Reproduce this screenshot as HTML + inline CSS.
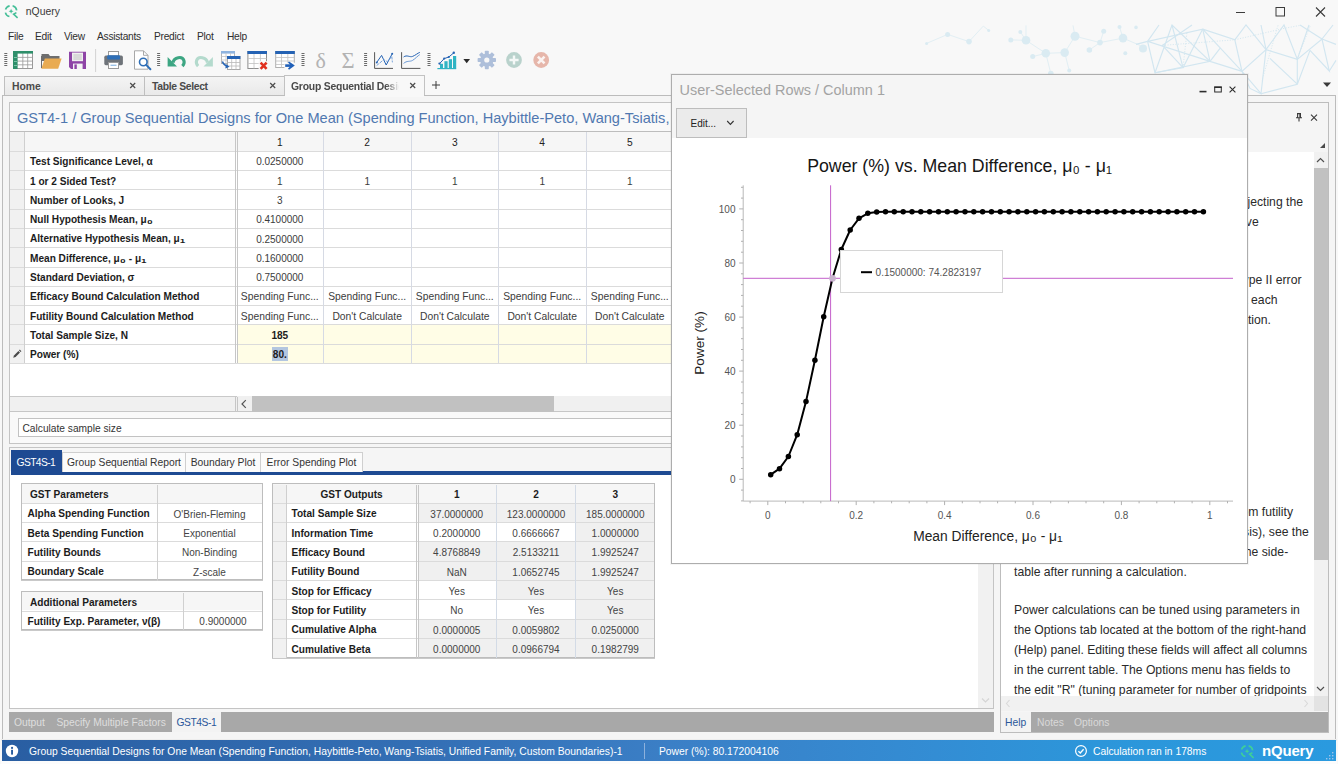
<!DOCTYPE html>
<html lang="en">
<head>
<meta charset="utf-8">
<title>nQuery</title>
<style>
*{box-sizing:border-box;margin:0;padding:0}
html,body{width:1338px;height:764px;overflow:hidden}
body{position:relative;background:#f4f4f4;font-family:"Liberation Sans",sans-serif;font-size:10px;color:#1e1e1e}
.a{position:absolute}
.t{position:absolute;white-space:nowrap;line-height:1}
.b{font-weight:bold}
.sb{font-size:1.35em;line-height:0;vertical-align:-.06em}
.c{text-align:center}
svg{position:absolute;overflow:visible}
/* grid */
.g{position:absolute;border-collapse:collapse}
.cell{position:absolute;height:19.25px;line-height:19px;white-space:nowrap;overflow:hidden}
.hl{position:absolute;height:1px;background:#dbdbdb}
.vl{position:absolute;width:1px;background:#d9d9d9}
</style>
</head>
<body>
<!-- ===== window chrome / title bar ===== -->
<div class="a" style="left:0;top:0;width:1338px;height:764px;background:#f8f8f8"></div>
<!-- decorative network graphic top right -->
<svg style="left:920px;top:24.6px" width="416" height="72" viewBox="920 24.6 416 72" fill="none">
 <g stroke="#e2eff4" stroke-width="1"><path d="M926.6 43 L947.6 34 L969 41.2 L983.3 25.7 L988.7 30"/><path d="M1010.8 39.5 L1026 39.9 L1045.8 52.9 L1064.7 52.2 L1075 35.8 L1100 42.2 L1123 37.7 L1140 45"/><path d="M1026 39.9 V25 M1045.8 52.9 L1050.8 73.1 M1064.7 52.2 L1069.2 70 M1075 35.8 L1073 25 M1100 42.2 L1103.7 30.8 M1100 42.2 L1089.4 49.6 M1032.7 56.2 L1045.8 52.9 M1123 37.7 L1119.5 26.5 M1020.3 31.5 L1026 39.9"/></g>
 <g fill="#daebf2"><circle cx="926.6" cy="43" r="1.5"/><circle cx="947.6" cy="34" r="2.5"/><circle cx="969" cy="41.2" r="2.8"/><circle cx="988.7" cy="30" r="1.5"/><circle cx="1010.8" cy="39.5" r="2.5"/><circle cx="1026" cy="39.9" r="4.3"/><circle cx="1020.3" cy="31.5" r="2"/><circle cx="1045.8" cy="52.9" r="4.3"/><circle cx="1032.7" cy="56.2" r="2.5"/><circle cx="1064.7" cy="52.2" r="4.3"/><circle cx="1075" cy="35.8" r="4.5"/><circle cx="1050.8" cy="73.1" r="2.8"/><circle cx="1069.2" cy="70" r="2"/><circle cx="1089.4" cy="49.6" r="2.8"/><circle cx="1100" cy="42.2" r="2.8"/><circle cx="1103.7" cy="30.8" r="2.5"/><circle cx="1123" cy="37.7" r="4.3"/><circle cx="1119.5" cy="26.5" r="2"/><circle cx="1125.3" cy="52.9" r="2"/><circle cx="1143" cy="48" r="4"/><circle cx="1136" cy="27" r="1.8"/></g>
 <g stroke="#d2e6f0" stroke-width="1.15"><path d="M1147.6 41 L1155 72.3 L1210 61 L1202.7 28.7 L1147.6 41 L1210 61"/><path d="M1147.6 41 L1159 24.6 M1155 72.3 L1172 24.6 L1210 61 M1155 72.3 L1183 67.3 L1162.4 45 L1192 24.6"/><path d="M1202.7 28.7 L1234.8 39.4 L1242 71 L1202.7 28.7 M1210 61 L1242 71 M1210 61 L1220 48 M1202.7 28.7 L1183 67.3"/><path d="M1234.8 39.4 L1246 24.6 L1266 49.2 L1242 71 L1261 93.3 L1266 49.2 L1297.3 59 L1322 38.6 L1329.3 70.6 L1310 50"/><path d="M1266 49.2 L1261 24.6 M1266 49.2 L1284 24.6 L1297.3 59 L1297.3 83.8 L1261 93.3 M1297.3 83.8 L1270 58 M1297.3 59 L1309 24.6 M1322 38.6 L1333 24.6 M1322 38.6 L1300 24.6 M1297.3 83.8 L1310 50 M1329.3 70.6 L1336 60 M1322 38.6 L1336 44"/><path d="M1242 71 L1250 88 L1261 93.3 M1172 24.6 L1183 67.3 M1147.6 41 L1136 44"/></g>
 <g stroke="#d3e7f0" stroke-width="1" stroke-dasharray="1 1.6"><path d="M1162.4 45 L1234.8 39.4 L1284 28 L1300 25"/><path d="M1183 67.3 L1187 31 M1278 25 L1262 80 M1310 26 L1297 59"/></g>
</svg>
<!-- app logo -->
<svg style="left:3px;top:3px" width="17" height="17" viewBox="0 0 17 17">
 <g fill="none" stroke="#45bf98" stroke-width="1.6">
 <path d="M6.6 2.9 A5.7 5.7 0 0 0 2.5 6.6"/>
 <path d="M2.4 9.6 A5.7 5.7 0 0 0 6.4 13.6"/>
 <path d="M9.6 2.8 A5.7 5.7 0 0 1 13.7 7.4"/>
 <path d="M14.6 14.8 L10.6 11.2 L13.4 9.6" stroke-linejoin="miter"/>
 </g>
 <path d="M8.1 5.7 L8.8 7.5 L10.6 8.2 L8.8 8.9 L8.1 10.7 L7.4 8.9 L5.6 8.2 L7.4 7.5z" fill="#45bf98"/>
</svg>
<div class="t" style="left:25.8px;top:7.2px;font-size:10.4px;color:#3a3a3a">nQuery</div>
<!-- window buttons -->
<svg style="left:1230px;top:4px" width="100" height="16" viewBox="0 0 100 16" fill="none" stroke="#3c3c3c" stroke-width="1">
 <path d="M6 8.5 H15"/>
 <rect x="46" y="3.5" width="8.5" height="8.5"/>
 <path d="M86 3.5 L95 12.5 M95 3.5 L86 12.5" stroke-width="1.1"/>
</svg>
<!-- menu bar -->
<div class="t" style="left:8px;top:32px;font-size:10.2px;color:#2e2e2e;letter-spacing:-.25px">
 <span class="a" style="left:0">File</span><span class="a" style="left:27px">Edit</span><span class="a" style="left:56px">View</span><span class="a" style="left:89px">Assistants</span><span class="a" style="left:146px">Predict</span><span class="a" style="left:189px">Plot</span><span class="a" style="left:219px">Help</span>
</div>
<!-- ===== toolbar ===== -->
<svg style="left:0;top:46px" width="560" height="28" viewBox="0 46 560 28" fill="none">
 <!-- grips -->
 <g stroke="#6a6a6a" stroke-width="3" stroke-dasharray="1 1">
  <path d="M5.8 53 V67"/><path d="M158.6 53 V67"/><path d="M303 53 V67"/><path d="M365.6 53 V67"/><path d="M429 53 V67"/>
 </g>
 <!-- new table (green) -->
 <g>
  <rect x="13.5" y="51.5" width="19" height="17" fill="#fff" stroke="#8f8f8f" stroke-width=".9"/>
  <path d="M13.5 57.4 H32.5 M13.5 61.1 H32.5 M13.5 64.8 H32.5 M22.8 51.5 V68.5 M27.7 51.5 V68.5" stroke="#9a9a9a" stroke-width=".8"/>
  <rect x="13" y="51" width="20" height="2.6" fill="#2f8f6b"/>
  <rect x="13" y="51" width="4.6" height="18" fill="#2f8f6b"/>
  <path d="M14 57.5 h3 M14 61.5 h3 M14 65.5 h3" stroke="#7cc3a8" stroke-width="1"/>
 </g>
 <!-- open folder -->
 <g>
  <path d="M41.5 54 h7 l1.5 2 h9.5 v5 h-18z" fill="#6e6e6e"/>
  <path d="M41.3 68.8 L44.8 58.5 H61.6 L58.2 68.8z" fill="#e9ab52"/>
  <path d="M41.5 56 V68" stroke="#6e6e6e" stroke-width="1"/>
 </g>
 <!-- save (purple) -->
 <g>
  <path d="M69 51.8 H86 V69 H71 L69 67z" fill="#8e44a6"/>
  <rect x="72" y="52.6" width="11" height="8.6" fill="#efefef"/>
  <path d="M73.4 55 h8.4 M73.4 57 h8.4 M73.4 59 h8.4" stroke="#bdbdbd" stroke-width=".9"/>
  <rect x="73" y="63.6" width="9.6" height="5.4" fill="#f4f4f4"/>
  <rect x="74.4" y="64.4" width="2.4" height="4.6" fill="#8e44a6"/>
 </g>
 <path d="M95.6 49 V72" stroke="#d2d2d2" stroke-width="1"/>
 <!-- print -->
 <g>
  <rect x="108.5" y="51.5" width="10" height="5" fill="#fff" stroke="#9a9a9a"/>
  <rect x="104.3" y="55.6" width="18.6" height="9.6" rx="1.6" fill="#6f747a"/>
  <rect x="107.2" y="55.2" width="12.8" height="4.2" rx="1" fill="#2f6fb7"/>
  <rect x="108.5" y="62.5" width="10" height="6" fill="#fff" stroke="#9a9a9a"/>
  <path d="M110.5 65.3 h6" stroke="#9cc3e8" stroke-width="1.4"/>
 </g>
 <!-- print preview -->
 <g>
  <path d="M134.5 50.8 H143.5 L148 55.3 V69.2 H134.5z" fill="#fff" stroke="#a8a8a8"/>
  <path d="M143.5 50.8 V55.3 H148" stroke="#a8a8a8"/>
  <circle cx="143.3" cy="62" r="3.8" fill="#fff" stroke="#2f6fb7" stroke-width="1.6"/>
  <path d="M146.2 64.9 L150.4 69.2" stroke="#2f6fb7" stroke-width="2" stroke-linecap="round"/>
 </g>
 <!-- undo -->
 <g>
  <path d="M173 62.6 C174 57.4 182.2 55.4 183.9 60.6 C184.6 62.8 183.8 64.8 182.4 66.2" fill="none" stroke="#3da683" stroke-width="3.1"/>
  <path d="M167.6 57 V66.4 H177z" fill="#3da683"/>
 </g>
 <!-- redo -->
 <g opacity=".36">
  <path d="M207.5 62.6 C206.5 57.4 198.3 55.4 196.6 60.6 C195.9 62.8 196.7 64.8 198.1 66.2" fill="none" stroke="#3da683" stroke-width="3.1"/>
  <path d="M212.9 57 V66.4 H203.5z" fill="#3da683"/>
 </g>
 <!-- copy table -->
 <g>
  <rect x="221.5" y="51.5" width="13" height="12" fill="#fff" stroke="#b5b5b5"/>
  <rect x="221" y="51" width="14" height="2.6" fill="#8fb4df"/>
  <path d="M221.5 56.5 h13 M221.5 60 h13 M226 53 v10 M230.5 53 v10" stroke="#c4c4c4" stroke-width=".8"/>
  <rect x="227.5" y="56.5" width="12.5" height="13" fill="#fff" stroke="#a8a8a8"/>
  <rect x="227" y="56" width="13.4" height="3" fill="#2563b4"/>
  <path d="M227.5 62.5 h12.5 M227.5 66 h12.5 M231.7 59 v10.5 M236 59 v10.5" stroke="#b9b9b9" stroke-width=".8"/>
  <path d="M222.4 61.6 C223.4 64.4 225 65.8 227.8 66.4" stroke="#2563b4" stroke-width="1.5"/>
  <path d="M229.6 66.8 L225.8 63.9 L225.4 68.4z" fill="#2563b4"/>
 </g>
 <!-- delete table -->
 <g>
  <rect x="247.9" y="51.5" width="18.6" height="17" fill="#fff" stroke="#8d8d8d"/>
  <rect x="247.4" y="51" width="19.6" height="3" fill="#2563b4"/>
  <path d="M247.9 58.5 h18.6 M247.9 63.5 h18.6 M254 54 v14.5 M260.4 54 v14.5" stroke="#c2c2c2" stroke-width=".8"/>
  <rect x="258.6" y="61.2" width="9.6" height="8.6" fill="#f8f8f8"/>
  <path d="M260.6 62.6 L266.6 68.8 M266.6 62.6 L260.6 68.8" stroke="#e0301e" stroke-width="2.6"/>
 </g>
 <!-- export table -->
 <g>
  <rect x="275.7" y="51.5" width="18.6" height="16" fill="#fff" stroke="#b0b0b0"/>
  <rect x="275.2" y="51" width="19.6" height="3" fill="#2563b4"/>
  <path d="M275.7 57.5 h18.6 M275.7 61 h18.6 M275.7 64.5 h18.6 M281.5 54 v13.5 M287.8 54 v13.5" stroke="#c2c2c2" stroke-width=".8"/>
  <rect x="284.4" y="62.8" width="11.4" height="7" fill="#f8f8f8"/>
  <path d="M285.2 65.6 H291" stroke="#1f5fb8" stroke-width="2.6"/>
  <path d="M289 61.4 L294.8 65.6 L289 69.8 L288 68.6 L291 65.6 L288 62.6z" fill="#1f5fb8"/>
 </g>
 <!-- delta, sigma -->
 <text x="320.8" y="67.6" font-family="'Liberation Serif',serif" font-size="22" fill="#b3b3b3" text-anchor="middle">δ</text>
 <text x="348" y="67.8" font-family="'Liberation Serif',serif" font-size="22.5" fill="#b3b3b3" text-anchor="middle">Σ</text>
 <!-- line chart 1 -->
 <g>
  <path d="M374.6 52.2 V68.4 H393" stroke="#555" stroke-width="1"/>
  <path d="M376.6 62.6 L381.6 55.4 L386.2 65 L392.2 53.8" stroke="#2563b4" stroke-width="1"/>
  <path d="M376.6 65.6 L383.8 59.6 L387.2 61.6 L391.8 56.6 L392.4 62.4" stroke="#6b9ad6" stroke-width=".9" stroke-dasharray="3 1"/>
  <circle cx="376.8" cy="62.6" r="1" fill="#2563b4"/><circle cx="392.2" cy="53.8" r="1" fill="#2563b4"/>
 </g>
 <!-- line chart 2 -->
 <g>
  <path d="M401.6 52.2 V68.4 H420.4" stroke="#555" stroke-width="1"/>
  <path d="M403.6 57 C407 54.4 409.6 57.6 412.6 56.4 C415.6 55.2 417.6 53.2 419.8 52.4" stroke="#2563b4" stroke-width="1"/>
  <path d="M403.6 63.4 C407 60.4 409.6 62 412.6 60.4 C415.6 58.4 417.6 56 419.8 54.6" stroke="#6b9ad6" stroke-width="1"/>
 </g>
 <!-- bar chart -->
 <g>
  <path d="M437.4 68.6 H456.2" stroke="#2fb4c4" stroke-width="1.2"/>
  <rect x="440" y="63.8" width="3" height="4.4" fill="#2fb4c4"/>
  <rect x="444.4" y="61.2" width="3.2" height="7" fill="#2fb4c4"/>
  <rect x="448.8" y="59.2" width="3.2" height="9" fill="#2fb4c4"/>
  <rect x="453" y="56" width="3.2" height="12.2" fill="#2fb4c4"/>
  <path d="M439.4 63.8 L444.2 58.6 L448.8 57 L453.8 52.8" stroke="#2563b4" stroke-width="1"/>
  <circle cx="439.4" cy="63.6" r="1.1" fill="#2563b4"/><circle cx="444.2" cy="58.6" r="1.1" fill="#2563b4"/><circle cx="448.8" cy="57" r="1.1" fill="#2563b4"/><circle cx="453.8" cy="52.8" r="1.2" fill="#2563b4"/>
 </g>
 <path d="M463.4 59 H470 L466.7 63.2z" fill="#2a2a2a"/>
 <!-- gear -->
 <g transform="translate(486.8 60)" fill="#aebfda">
  <g>
   <rect x="-2" y="-9.2" width="4" height="18.4" rx=".8"/>
   <rect x="-2" y="-9.2" width="4" height="18.4" rx=".8" transform="rotate(45)"/>
   <rect x="-2" y="-9.2" width="4" height="18.4" rx=".8" transform="rotate(90)"/>
   <rect x="-2" y="-9.2" width="4" height="18.4" rx=".8" transform="rotate(135)"/>
  </g>
  <circle r="6.6"/>
  <circle r="2.6" fill="#f8f8f8"/>
 </g>
 <!-- plus circle -->
 <g>
  <circle cx="514" cy="60" r="7.9" fill="#b9d2cc"/>
  <path d="M514 55.4 V64.6 M509.4 60 H518.6" stroke="#f4f8f7" stroke-width="2.4"/>
 </g>
 <!-- x circle -->
 <g>
  <circle cx="541.2" cy="60" r="7.9" fill="#e6b6aa"/>
  <path d="M537.9 56.7 L544.5 63.3 M544.5 56.7 L537.9 63.3" stroke="#fbf3f1" stroke-width="2.6"/>
 </g>
</svg>
<!-- ===== document tabs ===== -->
<div class="a" style="left:3px;top:95px;width:1332px;height:1px;background:#bdbdbd"></div>
<div class="a" style="left:4px;top:76.2px;width:141px;height:19.8px;border:1px solid #bfbfbf;border-bottom:1px solid #bdbdbd;background:linear-gradient(#f4f4f4,#e9e9e9)"></div>
<div class="a" style="left:144px;top:76.2px;width:141px;height:19.8px;border:1px solid #bfbfbf;border-bottom:1px solid #bdbdbd;background:linear-gradient(#f4f4f4,#e9e9e9)"></div>
<div class="a" style="left:284px;top:74.6px;width:141px;height:22.4px;border:1px solid #c2c2c2;border-bottom:none;background:#f8f8f8"></div>
<div class="t b" style="left:12px;top:82px;font-size:10.4px;color:#4a4a4a">Home</div>
<div class="t b" style="left:152px;top:82px;font-size:10.4px;color:#4a4a4a;letter-spacing:-.35px">Table Select</div>
<div class="t b" style="left:291px;top:82px;font-size:10.4px;color:#4a4a4a;letter-spacing:-.22px;width:108px;overflow:hidden;-webkit-mask-image:linear-gradient(90deg,#000 88%,transparent)">Group Sequential Design</div>
<svg style="left:128px;top:81px" width="300" height="10" viewBox="128 81 300 10" stroke="#4c4c4c" stroke-width="1.2" fill="none">
 <path d="M130.2 83 L135.2 88 M135.2 83 L130.2 88"/>
 <path d="M270.2 83 L275.2 88 M275.2 83 L270.2 88"/>
 <path d="M410.2 83 L415.2 88 M415.2 83 L410.2 88"/>
</svg>
<svg style="left:431px;top:80px" width="10" height="10" viewBox="0 0 10 10" stroke="#3a3a3a" stroke-width="1" fill="none"><path d="M5 1 V9 M1 5 H9"/></svg>
<svg style="left:1322px;top:82px" width="10" height="6" viewBox="0 0 10 6"><path d="M1 0.5 H9 L5 5z" fill="#3a3a3a"/></svg>
<!-- ===== document panel ===== -->
<div class="a" style="left:2px;top:95px;width:993px;height:644px;border:1px solid #bcbcbc;border-bottom:none;background:#f5f5f5"></div>
<div class="a" style="left:285px;top:94px;width:139px;height:3px;background:#f8f8f8"></div>
<div class="a" style="left:9px;top:102px;width:985px;height:342px;border:1px solid #c4c4c4;background:#f9f9f9"></div>
<div class="t" style="left:17px;top:110.7px;font-size:14.6px;color:#5078b0;letter-spacing:0">GST4-1 / Group Sequential Designs for One Mean (Spending Function, Haybittle-Peto, Wang-Tsiatis, Unified Family, Custom Boundaries)</div>
<div class="a" style="left:10px;top:131px;width:983px;height:280px;background:#fff;border-top:1px solid #bdbdbd"></div>
<div class="a" style="left:10px;top:132px;width:983px;height:19.3px;background:#f6f6f6"></div>
<div class="a" style="left:10px;top:132px;width:14px;height:231.4px;background:#f1f1f1"></div>
<div class="a" style="left:237px;top:324.8px;width:756px;height:38.6px;background:#fffde6"></div>
<div class="hl" style="left:10px;top:150.8px;width:983px"></div>
<div class="hl" style="left:10px;top:170.1px;width:983px"></div>
<div class="hl" style="left:10px;top:189.4px;width:983px"></div>
<div class="hl" style="left:10px;top:208.6px;width:983px"></div>
<div class="hl" style="left:10px;top:227.9px;width:983px"></div>
<div class="hl" style="left:10px;top:247.2px;width:983px"></div>
<div class="hl" style="left:10px;top:266.5px;width:983px"></div>
<div class="hl" style="left:10px;top:285.8px;width:983px"></div>
<div class="hl" style="left:10px;top:305.0px;width:983px"></div>
<div class="hl" style="left:10px;top:324.3px;width:983px"></div>
<div class="hl" style="left:10px;top:343.6px;width:983px"></div>
<div class="hl" style="left:10px;top:362.9px;width:983px"></div>
<div class="vl" style="left:24px;top:132px;height:231.4px;background:#cfcfcf"></div>
<div class="vl" style="left:234.5px;top:132px;height:231.4px;background:#c6c6c6"></div>
<div class="vl" style="left:236.5px;top:132px;height:231.4px;background:#c6c6c6"></div>
<div class="vl" style="left:323.0px;top:132px;height:231.4px;background:#d6dae4"></div>
<div class="vl" style="left:410.5px;top:132px;height:231.4px;background:#d6dae4"></div>
<div class="vl" style="left:498.0px;top:132px;height:231.4px;background:#d6dae4"></div>
<div class="vl" style="left:585.5px;top:132px;height:231.4px;background:#d6dae4"></div>
<div class="vl" style="left:673.0px;top:132px;height:231.4px;background:#d6dae4"></div>
<div class="vl" style="left:760.5px;top:132px;height:231.4px;background:#d6dae4"></div>
<div class="vl" style="left:848.0px;top:132px;height:231.4px;background:#d6dae4"></div>
<div class="vl" style="left:935.5px;top:132px;height:231.4px;background:#d6dae4"></div>
<div class="t c" style="left:259.8px;width:40px;top:137.6px;font-size:10.2px;color:#222">1</div>
<div class="t c" style="left:347.2px;width:40px;top:137.6px;font-size:10.2px;color:#222">2</div>
<div class="t c" style="left:434.8px;width:40px;top:137.6px;font-size:10.2px;color:#222">3</div>
<div class="t c" style="left:522.2px;width:40px;top:137.6px;font-size:10.2px;color:#222">4</div>
<div class="t c" style="left:609.8px;width:40px;top:137.6px;font-size:10.2px;color:#222">5</div>
<div class="t b" style="left:30px;top:157.3px;font-size:10.1px;color:#1c1c1c">Test Significance Level, α</div>
<div class="t c" style="left:236.8px;width:86px;top:157.4px;font-size:10px;color:#3c3c3c">0.0250000</div>
<div class="t b" style="left:30px;top:176.6px;font-size:10.1px;color:#1c1c1c">1 or 2 Sided Test?</div>
<div class="t c" style="left:236.8px;width:86px;top:176.7px;font-size:10px;color:#3c3c3c">1</div>
<div class="t c" style="left:324.2px;width:86px;top:176.7px;font-size:10px;color:#3c3c3c">1</div>
<div class="t c" style="left:411.8px;width:86px;top:176.7px;font-size:10px;color:#3c3c3c">1</div>
<div class="t c" style="left:499.2px;width:86px;top:176.7px;font-size:10px;color:#3c3c3c">1</div>
<div class="t c" style="left:586.8px;width:86px;top:176.7px;font-size:10px;color:#3c3c3c">1</div>
<div class="t b" style="left:30px;top:195.9px;font-size:10.1px;color:#1c1c1c">Number of Looks, J</div>
<div class="t c" style="left:236.8px;width:86px;top:196.0px;font-size:10px;color:#3c3c3c">3</div>
<div class="t b" style="left:30px;top:215.1px;font-size:10.1px;color:#1c1c1c">Null Hypothesis Mean, μ<span class="sb">₀</span></div>
<div class="t c" style="left:236.8px;width:86px;top:215.2px;font-size:10px;color:#3c3c3c">0.4100000</div>
<div class="t b" style="left:30px;top:234.4px;font-size:10.1px;color:#1c1c1c">Alternative Hypothesis Mean, μ<span class="sb">₁</span></div>
<div class="t c" style="left:236.8px;width:86px;top:234.5px;font-size:10px;color:#3c3c3c">0.2500000</div>
<div class="t b" style="left:30px;top:253.7px;font-size:10.1px;color:#1c1c1c">Mean Difference, μ<span class="sb">₀</span> - μ<span class="sb">₁</span></div>
<div class="t c" style="left:236.8px;width:86px;top:253.8px;font-size:10px;color:#3c3c3c">0.1600000</div>
<div class="t b" style="left:30px;top:273.0px;font-size:10.1px;color:#1c1c1c">Standard Deviation, σ</div>
<div class="t c" style="left:236.8px;width:86px;top:273.1px;font-size:10px;color:#3c3c3c">0.7500000</div>
<div class="t b" style="left:30px;top:292.3px;font-size:10.1px;color:#1c1c1c">Efficacy Bound Calculation Method</div>
<div class="t c" style="left:236.8px;width:86px;top:292.4px;font-size:10.3px;color:#3c3c3c">Spending Func...</div>
<div class="t c" style="left:324.2px;width:86px;top:292.4px;font-size:10.3px;color:#3c3c3c">Spending Func...</div>
<div class="t c" style="left:411.8px;width:86px;top:292.4px;font-size:10.3px;color:#3c3c3c">Spending Func...</div>
<div class="t c" style="left:499.2px;width:86px;top:292.4px;font-size:10.3px;color:#3c3c3c">Spending Func...</div>
<div class="t c" style="left:586.8px;width:86px;top:292.4px;font-size:10.3px;color:#3c3c3c">Spending Func...</div>
<div class="t b" style="left:30px;top:311.5px;font-size:10.1px;color:#1c1c1c">Futility Bound Calculation Method</div>
<div class="t c" style="left:236.8px;width:86px;top:311.6px;font-size:10.3px;color:#3c3c3c">Spending Func...</div>
<div class="t c" style="left:324.2px;width:86px;top:311.6px;font-size:10.3px;color:#3c3c3c">Don't Calculate</div>
<div class="t c" style="left:411.8px;width:86px;top:311.6px;font-size:10.3px;color:#3c3c3c">Don't Calculate</div>
<div class="t c" style="left:499.2px;width:86px;top:311.6px;font-size:10.3px;color:#3c3c3c">Don't Calculate</div>
<div class="t c" style="left:586.8px;width:86px;top:311.6px;font-size:10.3px;color:#3c3c3c">Don't Calculate</div>
<div class="t b" style="left:30px;top:330.8px;font-size:10.1px;color:#1c1c1c">Total Sample Size, N</div>
<div class="t c b" style="left:236.8px;width:86px;top:330.8px;font-size:10.1px;color:#1c1c1c">185</div>
<div class="t b" style="left:30px;top:350.1px;font-size:10.1px;color:#1c1c1c">Power (%)</div>
<div class="a" style="left:272px;top:346.6px;width:16px;height:14px;background:#b3c6e0"></div>
<div class="t c b" style="left:236.8px;width:86px;top:350.1px;font-size:10.1px;color:#1c1c1c">80.</div>
<svg style="left:12px;top:349.1px" width="10" height="10" viewBox="0 0 10 10"><path d="M1.2 8.8 L2 6.4 L6.4 2 L8 3.6 L3.6 8z" fill="#4a4a4a"/><path d="M7 1.4 L7.8 .6 L9.4 2.2 L8.6 3z" fill="#4a4a4a"/></svg>
<div class="a" style="left:10px;top:396px;width:983px;height:15.4px;background:#f0f0f0"></div>
<div class="a" style="left:10px;top:396px;width:227px;height:1px;background:#c9c9c9"></div>
<div class="a" style="left:10px;top:411px;width:983px;height:1px;background:#c6c6c6"></div>
<div class="vl" style="left:234.5px;top:397px;height:14px;background:#c6c6c6"></div><div class="vl" style="left:236.5px;top:397px;height:14px;background:#c6c6c6"></div>
<div class="a" style="left:252px;top:396px;width:302px;height:15.5px;background:#c1c1c1"></div>
<svg style="left:240px;top:399px" width="8" height="10" viewBox="0 0 8 10" fill="none" stroke="#555" stroke-width="1.2"><path d="M5.8 1.2 L2 5 L5.8 8.8"/></svg>
<div class="a" style="left:18px;top:418px;width:970px;height:19px;border:1px solid #c2c2c2;background:#fff"></div>
<div class="t" style="left:22.5px;top:423.8px;font-size:10.2px;color:#333">Calculate sample size</div>
<!-- ===== lower results panel ===== -->
<div class="a" style="left:9px;top:447px;width:985px;height:262px;border:1px solid #c4c4c4;background:#fff"></div>
<div class="a" style="left:10px;top:448px;width:983px;height:23px;background:#f5f5f5"></div>
<div class="a" style="left:11px;top:471px;width:982px;height:3.5px;background:#1e4a92"></div>
<div class="a" style="left:11px;top:450px;width:51px;height:22px;background:#1e4a92"></div>
<div class="t" style="left:16.5px;top:457.6px;font-size:10.3px;color:#fff;letter-spacing:-.6px">GST4S-1</div>
<div class="a" style="left:62px;top:452px;width:124px;height:20px;border:1px solid #cfcfcf;border-bottom:none;background:#fbfbfb"></div>
<div class="t c" style="left:62px;width:124px;top:457.8px;font-size:10.3px;color:#333">Group Sequential Report</div>
<div class="a" style="left:185px;top:452px;width:76px;height:20px;border:1px solid #cfcfcf;border-bottom:none;background:#fbfbfb"></div>
<div class="t c" style="left:185px;width:76px;top:457.8px;font-size:10.3px;color:#333">Boundary Plot</div>
<div class="a" style="left:260px;top:452px;width:103px;height:20px;border:1px solid #cfcfcf;border-bottom:none;background:#fbfbfb"></div>
<div class="t c" style="left:260px;width:103px;top:457.8px;font-size:10.3px;color:#333">Error Spending Plot</div>
<div class="a" style="left:21px;top:483.4px;width:241.5px;height:97.1px;background:#fff;border:1px solid #bdbdbd;box-shadow:0 1px 0 #c9c9c9"></div>
<div class="a" style="left:22px;top:484.4px;width:239.5px;height:18.3px;background:#f6f6f6"></div>
<div class="t b" style="left:30px;top:490.0px;font-size:10.1px;color:#1c1c1c">GST Parameters</div>
<div class="hl" style="left:22px;top:502.8px;width:240px"></div>
<div class="t b" style="left:27.5px;top:509.4px;font-size:10.1px;color:#1c1c1c">Alpha Spending Function</div>
<div class="t c" style="left:157px;width:105px;top:509.7px;font-size:10px;color:#444">O'Brien-Fleming</div>
<div class="hl" style="left:22px;top:522.1px;width:240px"></div>
<div class="t b" style="left:27.5px;top:528.7px;font-size:10.1px;color:#1c1c1c">Beta Spending Function</div>
<div class="t c" style="left:157px;width:105px;top:529.0px;font-size:10px;color:#444">Exponential</div>
<div class="hl" style="left:22px;top:541.4px;width:240px"></div>
<div class="t b" style="left:27.5px;top:548.0px;font-size:10.1px;color:#1c1c1c">Futility Bounds</div>
<div class="t c" style="left:157px;width:105px;top:548.3px;font-size:10px;color:#444">Non-Binding</div>
<div class="hl" style="left:22px;top:560.7px;width:240px"></div>
<div class="t b" style="left:27.5px;top:567.3px;font-size:10.1px;color:#1c1c1c">Boundary Scale</div>
<div class="t c" style="left:157px;width:105px;top:567.6px;font-size:10px;color:#444">Z-scale</div>
<div class="vl" style="left:156.5px;top:485.0px;height:95.5px;background:#d0d0d0"></div>
<div class="a" style="left:21px;top:591.1px;width:241.5px;height:39.2px;background:#fff;border:1px solid #bdbdbd;box-shadow:0 1px 0 #c9c9c9"></div>
<div class="a" style="left:22px;top:592.1px;width:239.5px;height:18.3px;background:#f6f6f6"></div>
<div class="t b" style="left:30px;top:597.7px;font-size:10.1px;color:#1c1c1c">Additional Parameters</div>
<div class="hl" style="left:22px;top:610.5px;width:240px"></div>
<div class="t b" style="left:27.5px;top:617.1px;font-size:10.1px;color:#1c1c1c">Futility Exp. Parameter, ν(β)</div>
<div class="t c" style="left:184px;width:78px;top:617.4px;font-size:10px;color:#444">0.9000000</div>
<div class="vl" style="left:183px;top:592.7px;height:37.6px;background:#d0d0d0"></div>
<div class="a" style="left:272px;top:483.4px;width:383px;height:174.3px;background:#fff;border:1px solid #bdbdbd;box-shadow:0 1px 0 #c9c9c9"></div>
<div class="a" style="left:273px;top:484.4px;width:381px;height:18.3px;background:#f6f6f6"></div>
<div class="a" style="left:273px;top:485.0px;width:13px;height:172.7px;background:#f1f1f1"></div>
<div class="a" style="left:418px;top:503.3px;width:236px;height:153.8px;background:#f0f0f0"></div>
<div class="a" style="left:417px;top:580.5px;width:79.5px;height:19.3px;background:#fff"></div>
<div class="a" style="left:417px;top:599.8px;width:79.5px;height:19.3px;background:#fff"></div>
<div class="a" style="left:417px;top:522.6px;width:79.5px;height:19.3px;background:#fff"></div>
<div class="a" style="left:496.5px;top:522.6px;width:79.0px;height:19.3px;background:#fff"></div>
<div class="a" style="left:496.5px;top:599.8px;width:79.0px;height:19.3px;background:#fff"></div>
<div class="t c b" style="left:286px;width:131px;top:490.0px;font-size:10.1px;color:#1c1c1c">GST Outputs</div>
<div class="t c b" style="left:417px;width:79.5px;top:490.0px;font-size:10.1px;color:#1c1c1c">1</div>
<div class="t c b" style="left:496.5px;width:79.0px;top:490.0px;font-size:10.1px;color:#1c1c1c">2</div>
<div class="t c b" style="left:575.5px;width:79.5px;top:490.0px;font-size:10.1px;color:#1c1c1c">3</div>
<div class="hl" style="left:273px;top:502.8px;width:381px"></div>
<div class="t b" style="left:291.5px;top:509.4px;font-size:10.1px;color:#1c1c1c">Total Sample Size</div>
<div class="t c" style="left:417px;width:79.5px;top:509.7px;font-size:10px;color:#444">37.0000000</div>
<div class="t c" style="left:496.5px;width:79.0px;top:509.7px;font-size:10px;color:#444">123.0000000</div>
<div class="t c" style="left:575.5px;width:79.5px;top:509.7px;font-size:10px;color:#444">185.0000000</div>
<div class="hl" style="left:273px;top:522.1px;width:381px"></div>
<div class="t b" style="left:291.5px;top:528.7px;font-size:10.1px;color:#1c1c1c">Information Time</div>
<div class="t c" style="left:417px;width:79.5px;top:529.0px;font-size:10px;color:#444">0.2000000</div>
<div class="t c" style="left:496.5px;width:79.0px;top:529.0px;font-size:10px;color:#444">0.6666667</div>
<div class="t c" style="left:575.5px;width:79.5px;top:529.0px;font-size:10px;color:#444">1.0000000</div>
<div class="hl" style="left:273px;top:541.4px;width:381px"></div>
<div class="t b" style="left:291.5px;top:548.0px;font-size:10.1px;color:#1c1c1c">Efficacy Bound</div>
<div class="t c" style="left:417px;width:79.5px;top:548.3px;font-size:10px;color:#444">4.8768849</div>
<div class="t c" style="left:496.5px;width:79.0px;top:548.3px;font-size:10px;color:#444">2.5133211</div>
<div class="t c" style="left:575.5px;width:79.5px;top:548.3px;font-size:10px;color:#444">1.9925247</div>
<div class="hl" style="left:273px;top:560.7px;width:381px"></div>
<div class="t b" style="left:291.5px;top:567.3px;font-size:10.1px;color:#1c1c1c">Futility Bound</div>
<div class="t c" style="left:417px;width:79.5px;top:567.6px;font-size:10px;color:#444">NaN</div>
<div class="t c" style="left:496.5px;width:79.0px;top:567.6px;font-size:10px;color:#444">1.0652745</div>
<div class="t c" style="left:575.5px;width:79.5px;top:567.6px;font-size:10px;color:#444">1.9925247</div>
<div class="hl" style="left:273px;top:580.0px;width:381px"></div>
<div class="t b" style="left:291.5px;top:586.6px;font-size:10.1px;color:#1c1c1c">Stop for Efficacy</div>
<div class="t c" style="left:417px;width:79.5px;top:586.9px;font-size:10px;color:#444">Yes</div>
<div class="t c" style="left:496.5px;width:79.0px;top:586.9px;font-size:10px;color:#444">Yes</div>
<div class="t c" style="left:575.5px;width:79.5px;top:586.9px;font-size:10px;color:#444">Yes</div>
<div class="hl" style="left:273px;top:599.3px;width:381px"></div>
<div class="t b" style="left:291.5px;top:605.9px;font-size:10.1px;color:#1c1c1c">Stop for Futility</div>
<div class="t c" style="left:417px;width:79.5px;top:606.2px;font-size:10px;color:#444">No</div>
<div class="t c" style="left:496.5px;width:79.0px;top:606.2px;font-size:10px;color:#444">Yes</div>
<div class="t c" style="left:575.5px;width:79.5px;top:606.2px;font-size:10px;color:#444">Yes</div>
<div class="hl" style="left:273px;top:618.6px;width:381px"></div>
<div class="t b" style="left:291.5px;top:625.2px;font-size:10.1px;color:#1c1c1c">Cumulative Alpha</div>
<div class="t c" style="left:417px;width:79.5px;top:625.5px;font-size:10px;color:#444">0.0000005</div>
<div class="t c" style="left:496.5px;width:79.0px;top:625.5px;font-size:10px;color:#444">0.0059802</div>
<div class="t c" style="left:575.5px;width:79.5px;top:625.5px;font-size:10px;color:#444">0.0250000</div>
<div class="hl" style="left:273px;top:637.9px;width:381px"></div>
<div class="t b" style="left:291.5px;top:644.5px;font-size:10.1px;color:#1c1c1c">Cumulative Beta</div>
<div class="t c" style="left:417px;width:79.5px;top:644.8px;font-size:10px;color:#444">0.0000000</div>
<div class="t c" style="left:496.5px;width:79.0px;top:644.8px;font-size:10px;color:#444">0.0966794</div>
<div class="t c" style="left:575.5px;width:79.5px;top:644.8px;font-size:10px;color:#444">0.1982799</div>
<div class="vl" style="left:285.5px;top:485.0px;height:172.7px;background:#cfcfcf"></div>
<div class="vl" style="left:415.5px;top:485.0px;height:172.7px;background:#c6c6c6"></div>
<div class="vl" style="left:417.5px;top:485.0px;height:172.7px;background:#c6c6c6"></div>
<div class="vl" style="left:496px;top:485.0px;height:172.7px;background:#d3dbe6"></div>
<div class="vl" style="left:575px;top:485.0px;height:172.7px;background:#d3dbe6"></div>
<div class="a" style="left:978px;top:475px;width:15px;height:233px;background:#f1f1f1"></div>
<svg style="left:981px;top:697px" width="9" height="7" viewBox="0 0 9 7" fill="none" stroke="#d4d4d4" stroke-width="1.1"><path d="M1 1.5 L4.5 5 L8 1.5"/></svg>
<div class="a" style="left:9px;top:712px;width:986.5px;height:20px;background:#a8a8a8"></div>
<div class="a" style="left:172px;top:712px;width:49px;height:20px;background:#f3f3f3"></div>
<div class="t" style="left:14px;top:717.8px;font-size:10.3px;color:#dedede">Output</div>
<div class="t" style="left:56.5px;top:717.8px;font-size:10.3px;color:#dedede">Specify Multiple Factors</div>
<div class="t" style="left:176.5px;top:717.8px;font-size:10.3px;color:#2b579a;letter-spacing:-.45px">GST4S-1</div>
<!-- ===== help panel (right) ===== -->
<div class="a" style="left:994px;top:95px;width:341.6px;height:644px;border:1px solid #bcbcbc;border-left:none;border-bottom:none;background:#f5f5f5"></div>
<div class="a" style="left:1000px;top:102px;width:1329px;width:329px;height:631px;border:1px solid #bdbdbd;background:#f5f5f5"></div>
<svg style="left:1294px;top:112px" width="26" height="12" viewBox="1294 112 26 12" fill="none">
 <path d="M1297 113.6 h4 M1297.6 113.6 v4 M1300.4 113.6 v4 M1296 117.8 h6 M1299 118 v3.4" stroke="#3a3a3a" stroke-width="1.1"/>
 <rect x="1299.4" y="113.6" width="1.4" height="4" fill="#3a3a3a"/>
 <path d="M1311 114.6 L1317 120.6 M1317 114.6 L1311 120.6" stroke="#3a3a3a" stroke-width="1.1"/>
</svg>
<svg style="left:1320px;top:143px" width="5" height="5" viewBox="0 0 5 5"><path d="M5 0 V5 H0z" fill="#4a4a4a"/></svg>
<div class="a" style="left:1001px;top:152px;width:327px;height:544px;background:#fff"></div>
<!-- vertical scrollbar -->
<div class="a" style="left:1313.5px;top:152px;width:14.5px;height:544px;background:#f1f1f1"></div>
<div class="a" style="left:1313.5px;top:167.5px;width:14.5px;height:392.5px;background:#c1c1c1"></div>
<svg style="left:1316px;top:157px" width="9" height="6" viewBox="0 0 9 6" fill="none" stroke="#505050" stroke-width="1.2"><path d="M1 5 L4.5 1.5 L8 5"/></svg>
<svg style="left:1316px;top:686px" width="9" height="6" viewBox="0 0 9 6" fill="none" stroke="#505050" stroke-width="1.2"><path d="M1 1 L4.5 4.5 L8 1"/></svg>
<!-- horizontal scrollbar -->
<div class="a" style="left:1001px;top:696px;width:327px;height:15px;background:#f1f1f1"></div>
<svg style="left:1005px;top:699px" width="6" height="9" viewBox="0 0 6 9" fill="none" stroke="#d9d9d9" stroke-width="1.1"><path d="M4.5 1 L1.5 4.5 L4.5 8"/></svg>
<svg style="left:1303px;top:699px" width="6" height="9" viewBox="0 0 6 9" fill="none" stroke="#d9d9d9" stroke-width="1.1"><path d="M1.5 1 L4.5 4.5 L1.5 8"/></svg>
<div class="a" style="left:1313.5px;top:696px;width:14.5px;height:15px;background:#e3e3e3"></div>
<!-- help text -->
<div class="a" style="left:1001px;top:152px;width:312px;height:544px;overflow:hidden;font-size:12.2px;color:#2a2a2a;line-height:20px">
 <div class="t" style="right:10px;top:40px;line-height:20px">Power is the probability of correctly rejecting the</div>
 <div class="t" style="right:54.3px;top:60px;line-height:20px">null hypothesis when the alternative</div>
 <div class="t" style="left:13px;top:80px;line-height:20px">hypothesis is true.</div>
 <div class="t" style="right:11.5px;top:118px;line-height:20px">It is equal to one minus the chance of a Type II error</div>
 <div class="t" style="right:35.5px;top:138px;line-height:20px">and is reported as a cumulative value at each</div>
 <div class="t" style="right:42px;top:158px;line-height:20px">look once you have run the calculation.</div>
 <div class="t" style="left:13px;top:196px;line-height:20px">For further detail on the cumulative</div>
 <div class="t" style="left:13px;top:216px;line-height:20px">exit probabilities at each look</div>
 <div class="t" style="right:20px;top:350px;line-height:20px">(including the chance of stopping from futility</div>
 <div class="t" style="right:4.2px;top:370px;line-height:20px">or efficacy at every interim analysis), see the</div>
 <div class="t" style="right:24.8px;top:390px;line-height:20px">Group Sequential Report or the side-</div>
 <div class="t" style="left:13px;top:410px;line-height:20px">table after running a calculation.</div>
 <div class="t" style="left:13px;top:447.5px;line-height:20px">Power calculations can be tuned using parameters in</div>
 <div class="t" style="left:13px;top:467.5px;line-height:20px">the Options tab located at the bottom of the right-hand</div>
 <div class="t" style="left:13px;top:487.5px;line-height:20px">(Help) panel. Editing these fields will affect all columns</div>
 <div class="t" style="left:13px;top:507.5px;line-height:20px">in the current table. The Options menu has fields to</div>
 <div class="t" style="left:13px;top:527.5px;line-height:20px">the edit "R" (tuning parameter for number of gridpoints</div>
</div>
<!-- help bottom tabs -->
<div class="a" style="left:1001px;top:712px;width:327px;height:20px;background:#a8a8a8"></div>
<div class="a" style="left:1001px;top:712px;width:30px;height:20px;background:#f3f3f3"></div>
<div class="t" style="left:1005px;top:717.6px;font-size:10.3px;color:#2b579a">Help</div>
<div class="t" style="left:1037px;top:717.6px;font-size:10.3px;color:#d8d8d8">Notes</div>
<div class="t" style="left:1074px;top:717.6px;font-size:10.3px;color:#d8d8d8">Options</div>
<!-- ===== status bar ===== -->
<div class="a" style="left:1px;top:739px;width:1336px;height:2px;background:#ededed"></div>
<div class="a" style="left:2px;top:739.7px;width:1334px;height:21.1px;background:linear-gradient(90deg,#295ea2 0%,#3470b6 33%,#3b7fc6 50%,#338dd4 70%,#2c96da 82%,#2a9adf 100%)"></div>
<div class="a" style="left:1px;top:761px;width:1336px;height:3px;background:#fcfcfc"></div>
<svg style="left:5px;top:744.2px" width="14" height="14" viewBox="0 0 14 14"><circle cx="7" cy="7" r="6.2" fill="#fff"/><rect x="6.1" y="5.8" width="1.9" height="4.8" fill="#255a9e"/><circle cx="7.05" cy="3.9" r="1.1" fill="#255a9e"/></svg>
<div class="t" style="left:29px;top:746.8px;font-size:10.33px;color:#fff">Group Sequential Designs for One Mean (Spending Function, Haybittle-Peto, Wang-Tsiatis, Unified Family, Custom Boundaries)-1</div>
<div class="a" style="left:644px;top:743px;width:1px;height:16px;background:#8db1dc"></div>
<div class="t" style="left:659px;top:746.8px;font-size:10.3px;color:#fff">Power (%): 80.172004106</div>
<svg style="left:1074px;top:744px" width="14" height="14" viewBox="0 0 14 14" fill="none" stroke="#fff"><circle cx="7" cy="7" r="5.4" stroke-width="1.2"/><path d="M4.4 7.2 L6.3 9 L9.6 5.2" stroke-width="1.3"/></svg>
<div class="t" style="left:1093px;top:746.8px;font-size:10.3px;color:#fff">Calculation ran in 178ms</div>
<svg style="left:1238.6px;top:742.6px" width="17" height="17" viewBox="0 0 17 17">
 <g fill="none" stroke="#3fd097" stroke-width="1.6">
 <path d="M6.6 2.9 A5.7 5.7 0 0 0 2.5 6.6"/>
 <path d="M2.4 9.6 A5.7 5.7 0 0 0 6.4 13.6"/>
 <path d="M9.6 2.8 A5.7 5.7 0 0 1 13.7 7.4"/>
 <path d="M14.6 14.8 L10.6 11.2 L13.4 9.6" stroke-linejoin="miter"/>
 </g>
 <path d="M8.1 5.7 L8.8 7.5 L10.6 8.2 L8.8 8.9 L8.1 10.7 L7.4 8.9 L5.6 8.2 L7.4 7.5z" fill="#3fd097"/>
</svg>
<div class="t b" style="left:1262px;top:743px;font-size:15px;color:#fff;letter-spacing:-.2px">nQuery</div>
<svg style="left:1326px;top:752px" width="8" height="8" viewBox="0 0 8 8" fill="#9cc4ea"><rect x="6" y="0" width="1.4" height="1.4"/><rect x="6" y="3" width="1.4" height="1.4"/><rect x="3" y="3" width="1.4" height="1.4"/><rect x="6" y="6" width="1.4" height="1.4"/><rect x="3" y="6" width="1.4" height="1.4"/><rect x="0" y="6" width="1.4" height="1.4"/></svg>
<!-- ===== floating plot window ===== -->
<div class="a" style="left:671px;top:74px;width:577px;height:490px;border:1px solid #adadad;background:#f5f5f5;box-shadow:0 0 0 1px rgba(0,0,0,.04)"></div>
<div class="t" style="left:679.5px;top:82.6px;font-size:14.45px;color:#a3a3a3">User-Selected Rows / Column 1</div>
<svg style="left:1198px;top:85px" width="40" height="9" viewBox="1198 85 40 9" fill="none" stroke="#2d2d2d"><path d="M1199.5 91.6 H1206.5" stroke-width="1.6"/><rect x="1214.7" y="87.2" width="6.6" height="4.8" stroke-width="1"/><path d="M1214.2 87.2 H1221.8" stroke-width="1.6"/><path d="M1229.6 86.6 L1235.4 92.4 M1235.4 86.6 L1229.6 92.4" stroke-width="1.1"/></svg>
<div class="a" style="left:676px;top:107.5px;width:70.5px;height:30px;border:1px solid #bdbdbd;background:#ebebeb"></div>
<div class="t" style="left:690.5px;top:118.8px;font-size:10px;color:#222">Edit...</div>
<svg style="left:726px;top:120px" width="9" height="6" viewBox="0 0 9 6" fill="none" stroke="#333" stroke-width="1.1"><path d="M1.2 1 L4.4 4.4 L7.6 1"/></svg>
<div class="a" style="left:672px;top:138px;width:575px;height:425px;background:#fff"></div>
<svg style="left:672px;top:138px" width="575" height="425" viewBox="672 138 575 425" font-family="'Liberation Sans',sans-serif">
<text x="959.5" y="172" font-size="17.75" fill="#161616" text-anchor="middle">Power (%) vs. Mean Difference, μ₀ - μ₁</text>
<path d="M743.2 185.3 V501.1 H1233" fill="none" stroke="#b9b9b9" stroke-width="1"/>
<path d="M741.0 500.9 H743.2 M741.0 490.1 H743.2 M739.2 479.3 H743.2 M741.0 468.5 H743.2 M741.0 457.7 H743.2 M741.0 446.9 H743.2 M741.0 436.0 H743.2 M739.2 425.2 H743.2 M741.0 414.4 H743.2 M741.0 403.6 H743.2 M741.0 392.8 H743.2 M741.0 382.0 H743.2 M739.2 371.1 H743.2 M741.0 360.3 H743.2 M741.0 349.5 H743.2 M741.0 338.7 H743.2 M741.0 327.9 H743.2 M739.2 317.1 H743.2 M741.0 306.2 H743.2 M741.0 295.4 H743.2 M741.0 284.6 H743.2 M741.0 273.8 H743.2 M739.2 263.0 H743.2 M741.0 252.2 H743.2 M741.0 241.3 H743.2 M741.0 230.5 H743.2 M741.0 219.7 H743.2 M739.2 208.9 H743.2 M741.0 198.1 H743.2 M741.0 187.3 H743.2" stroke="#b0b0b0" stroke-width="1" fill="none"/>
<text x="735.5" y="482.9" font-size="10" fill="#555" text-anchor="end">0</text>
<text x="735.5" y="428.8" font-size="10" fill="#555" text-anchor="end">20</text>
<text x="735.5" y="374.7" font-size="10" fill="#555" text-anchor="end">40</text>
<text x="735.5" y="320.7" font-size="10" fill="#555" text-anchor="end">60</text>
<text x="735.5" y="266.6" font-size="10" fill="#555" text-anchor="end">80</text>
<text x="735.5" y="212.5" font-size="10" fill="#555" text-anchor="end">100</text>
<path d="M750.1 501.1 V503.3 M767.8 501.1 V505.1 M785.5 501.1 V503.3 M803.2 501.1 V503.3 M820.8 501.1 V503.3 M838.5 501.1 V503.3 M856.2 501.1 V505.1 M873.9 501.1 V503.3 M891.6 501.1 V503.3 M909.2 501.1 V503.3 M926.9 501.1 V503.3 M944.6 501.1 V505.1 M962.3 501.1 V503.3 M980.0 501.1 V503.3 M997.6 501.1 V503.3 M1015.3 501.1 V503.3 M1033.0 501.1 V505.1 M1050.7 501.1 V503.3 M1068.4 501.1 V503.3 M1086.0 501.1 V503.3 M1103.7 501.1 V503.3 M1121.4 501.1 V505.1 M1139.1 501.1 V503.3 M1156.8 501.1 V503.3 M1174.4 501.1 V503.3 M1192.1 501.1 V503.3 M1209.8 501.1 V505.1 M1227.5 501.1 V503.3" stroke="#b0b0b0" stroke-width="1" fill="none"/>
<text x="767.8" y="518.6" font-size="10" fill="#555" text-anchor="middle">0</text>
<text x="856.2" y="518.6" font-size="10" fill="#555" text-anchor="middle">0.2</text>
<text x="944.6" y="518.6" font-size="10" fill="#555" text-anchor="middle">0.4</text>
<text x="1033.0" y="518.6" font-size="10" fill="#555" text-anchor="middle">0.6</text>
<text x="1121.4" y="518.6" font-size="10" fill="#555" text-anchor="middle">0.8</text>
<text x="1209.8" y="518.6" font-size="10" fill="#555" text-anchor="middle">1</text>
<text x="988" y="540.6" font-size="13.8" fill="#222" text-anchor="middle">Mean Difference, μ<tspan font-size="17" dy="0.6">₀</tspan><tspan dy="-0.6"> - μ</tspan><tspan font-size="17" dy="0.6">₁</tspan></text>
<text transform="translate(703.6 343) rotate(-90)" font-size="13.6" fill="#222" text-anchor="middle">Power (%)</text>
<path d="M830.6 185.3 V501.1 M743.2 278.3 H1233" stroke="#c45fcb" stroke-width="1" fill="none"/>
<polyline fill="none" stroke="#000" stroke-width="2" stroke-linejoin="round" points="770.7,474.7 779.5,468.7 788.4,456.5 797.2,434.7 806.0,401.6 814.9,360.2 823.7,316.8 832.5,278.3 841.3,249.5 850.2,230.0 859.0,218.3 867.8,213.3 876.7,211.9 885.5,211.7 894.3,211.7 903.2,211.7 912.0,211.7 920.8,211.7 929.6,211.7 938.5,211.7 947.3,211.7 956.1,211.7 965.0,211.7 973.8,211.7 982.6,211.7 991.5,211.7 1000.3,211.7 1009.1,211.7 1017.9,211.7 1026.8,211.7 1035.6,211.7 1044.4,211.7 1053.3,211.7 1062.1,211.7 1070.9,211.7 1079.8,211.7 1088.6,211.7 1097.4,211.7 1106.2,211.7 1115.1,211.7 1123.9,211.7 1132.7,211.7 1141.6,211.7 1150.4,211.7 1159.2,211.7 1168.1,211.7 1176.9,211.7 1185.7,211.7 1194.5,211.7 1203.4,211.7"/>
<g fill="#000"><circle cx="770.7" cy="474.7" r="2.75"/><circle cx="779.5" cy="468.7" r="2.75"/><circle cx="788.4" cy="456.5" r="2.75"/><circle cx="797.2" cy="434.7" r="2.75"/><circle cx="806.0" cy="401.6" r="2.75"/><circle cx="814.9" cy="360.2" r="2.75"/><circle cx="823.7" cy="316.8" r="2.75"/><circle cx="841.3" cy="249.5" r="2.75"/><circle cx="850.2" cy="230.0" r="2.75"/><circle cx="859.0" cy="218.3" r="2.75"/><circle cx="867.8" cy="213.3" r="2.75"/><circle cx="876.7" cy="211.9" r="2.75"/><circle cx="885.5" cy="211.7" r="2.75"/><circle cx="894.3" cy="211.7" r="2.75"/><circle cx="903.2" cy="211.7" r="2.75"/><circle cx="912.0" cy="211.7" r="2.75"/><circle cx="920.8" cy="211.7" r="2.75"/><circle cx="929.6" cy="211.7" r="2.75"/><circle cx="938.5" cy="211.7" r="2.75"/><circle cx="947.3" cy="211.7" r="2.75"/><circle cx="956.1" cy="211.7" r="2.75"/><circle cx="965.0" cy="211.7" r="2.75"/><circle cx="973.8" cy="211.7" r="2.75"/><circle cx="982.6" cy="211.7" r="2.75"/><circle cx="991.5" cy="211.7" r="2.75"/><circle cx="1000.3" cy="211.7" r="2.75"/><circle cx="1009.1" cy="211.7" r="2.75"/><circle cx="1017.9" cy="211.7" r="2.75"/><circle cx="1026.8" cy="211.7" r="2.75"/><circle cx="1035.6" cy="211.7" r="2.75"/><circle cx="1044.4" cy="211.7" r="2.75"/><circle cx="1053.3" cy="211.7" r="2.75"/><circle cx="1062.1" cy="211.7" r="2.75"/><circle cx="1070.9" cy="211.7" r="2.75"/><circle cx="1079.8" cy="211.7" r="2.75"/><circle cx="1088.6" cy="211.7" r="2.75"/><circle cx="1097.4" cy="211.7" r="2.75"/><circle cx="1106.2" cy="211.7" r="2.75"/><circle cx="1115.1" cy="211.7" r="2.75"/><circle cx="1123.9" cy="211.7" r="2.75"/><circle cx="1132.7" cy="211.7" r="2.75"/><circle cx="1141.6" cy="211.7" r="2.75"/><circle cx="1150.4" cy="211.7" r="2.75"/><circle cx="1159.2" cy="211.7" r="2.75"/><circle cx="1168.1" cy="211.7" r="2.75"/><circle cx="1176.9" cy="211.7" r="2.75"/><circle cx="1185.7" cy="211.7" r="2.75"/><circle cx="1194.5" cy="211.7" r="2.75"/><circle cx="1203.4" cy="211.7" r="2.75"/></g>
<circle cx="832.5" cy="278.3" r="3.4" fill="#c9b3cf"/>
<rect x="840.5" y="250.5" width="162" height="42" fill="#fff" stroke="#d6d6d6"/>
<path d="M861 272.2 H872" stroke="#000" stroke-width="2"/>
<text x="875.6" y="275.8" font-size="10" fill="#555">0.1500000: 74.2823197</text>
</svg>
</body>
</html>
